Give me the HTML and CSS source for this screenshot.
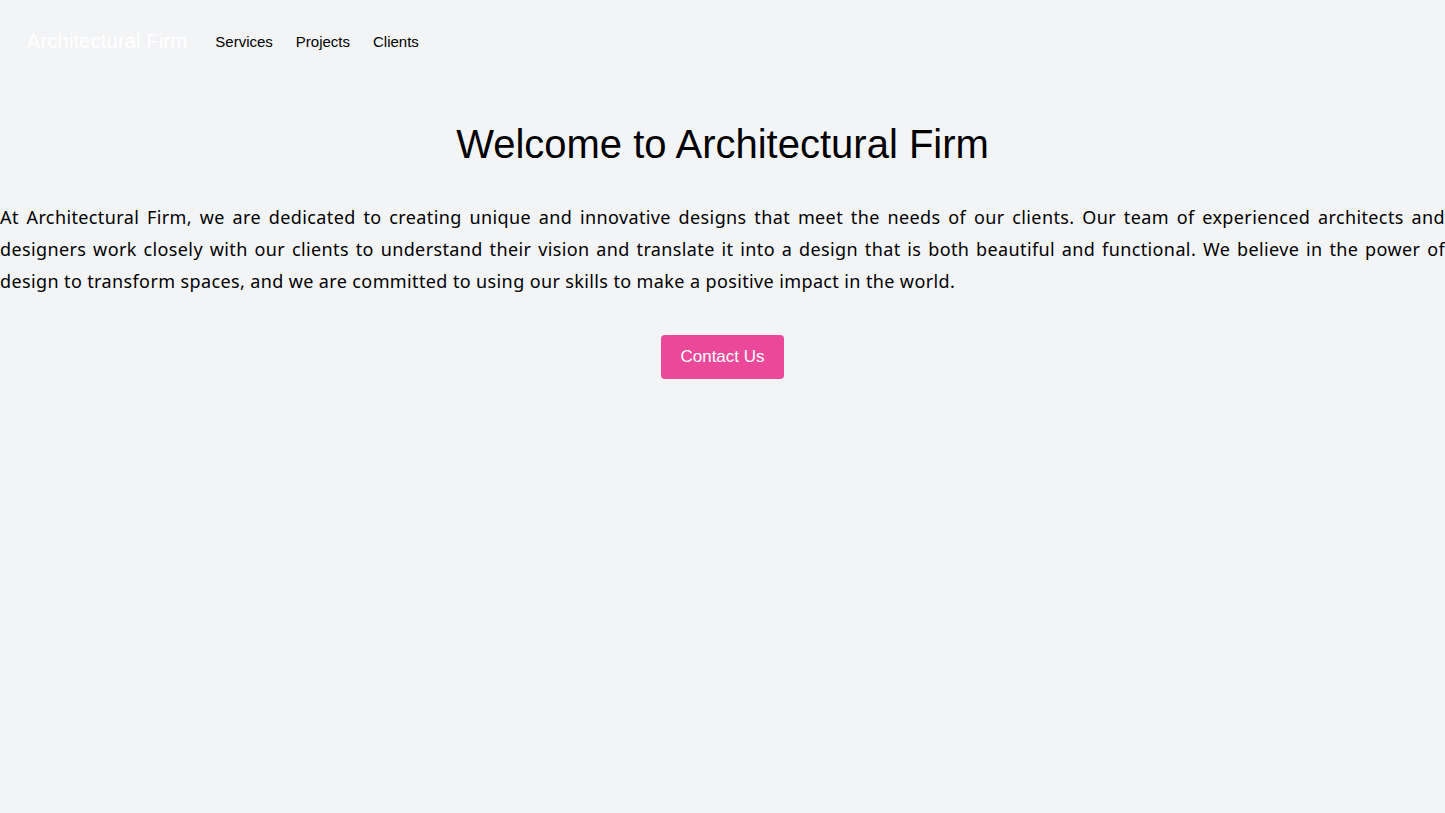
FILE: index.html
```html
<!DOCTYPE html>
<html lang="en">
<head>
    <meta charset="UTF-8">
    <meta name="viewport" content="width=device-width, initial-scale=1.0">
    <title>Architectural Firm</title>
    <link rel="stylesheet" href="styles.css">
</head>
<body>
<nav class="nav">
    <a href="#" class="brand">Architectural Firm</a>
    <a href="#" class="nav-link">Services</a>
    <a href="#" class="nav-link">Projects</a>
    <a href="#" class="nav-link">Clients</a>
</nav>

<main class="hero">
    <h1>Welcome to Architectural Firm</h1>
    <p>At Architectural Firm, we are dedicated to creating unique and innovative designs that meet the needs of our clients. Our team of experienced architects and designers work closely with our clients to understand their vision and translate it into a design that is both beautiful and functional. We believe in the power of design to transform spaces, and we are committed to using our skills to make a positive impact in the world.</p>
    <div class="actions">
        <a href="#" class="contact-btn">Contact Us</a>
    </div>
</main>
</body>
</html>
```

FILE: styles.css
```css
body {
    font-family: "Liberation Sans", Arial, sans-serif;
    background-color: #f3f4f6;
    color: #000;
    margin: 0;
    min-height: 813px;
}
a {
    text-decoration: none;
}
.nav {
    display: flex;
    align-items: center;
    padding: 24px 27px;
    height: 34px;
}
.brand {
    color: #ffffff;
    font-size: 20px;
    letter-spacing: 0.2px;
    margin-right: 28px;
}
.nav-link {
    color: #000;
    font-size: 15px;
    margin-right: 23px;
}
.hero {
    padding-top: 38px;
}
h1 {
    font-size: 40px;
    font-weight: 400;
    text-align: center;
    margin: 0 0 33px;
    line-height: 1.2;
}
p {
    font-family: "Noto Sans", Arial, sans-serif;
    font-size: 18px;
    letter-spacing: 0.38px;
    line-height: 32px;
    text-align: justify;
    margin: 0;
}
.actions {
    display: flex;
    justify-content: center;
    margin-top: 38px;
}
.contact-btn {
    display: inline-block;
    background-color: #ec4899;
    color: #fff;
    font-size: 17px;
    padding: 10px 19px;
    line-height: 24px;
    border-radius: 4px;
}
```
